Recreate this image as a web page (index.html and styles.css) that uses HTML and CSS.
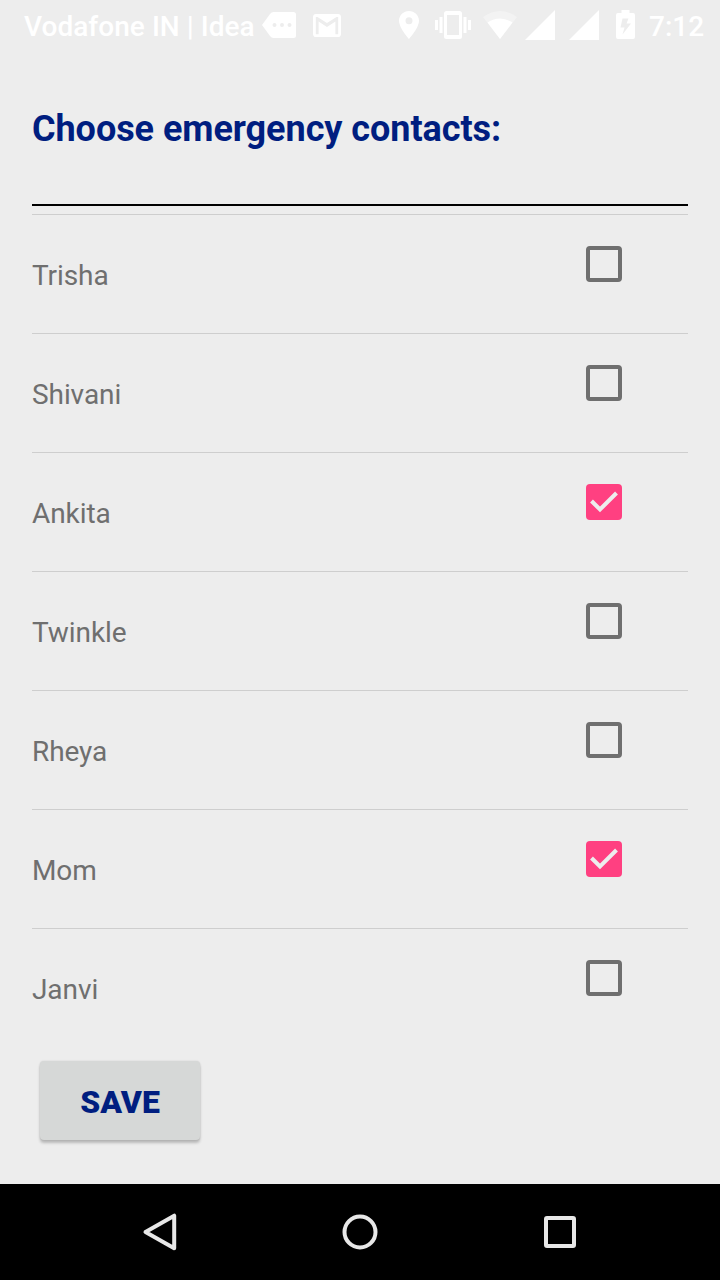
FILE: index.html
```
<!DOCTYPE html>
<html lang="en">
<head>
<meta charset="utf-8">
<title>Emergency contacts</title>
<link rel="stylesheet" href="styles.css">
</head>
<body>
<div class="screen">
  <header class="status">
    <span class="carrier">Vodafone IN | Idea</span>
    <svg class="ic-msg" width="34" height="26" viewBox="0 0 34 26"><path fill="#fff" fill-rule="evenodd" d="M8 2Q9.500 0 11.500 0H31.500Q34 0 34 2.500V23.500Q34 26 31.500 26H11.500Q9.500 26 8 24L0 13ZM12.500 11a2 2 0 1 0 0 4 2 2 0 0 0 0-4ZM20 11a2 2 0 1 0 0 4 2 2 0 0 0 0-4ZM27.500 11a2 2 0 1 0 0 4 2 2 0 0 0 0-4Z"/></svg>
    <svg class="ic-mail" width="28" height="23" viewBox="2 4 20 16" preserveAspectRatio="none"><path fill="#fff" d="M20 4H4c-1.100 0-2 .9-2 2v12c0 1.100.9 2 2 2h16c1.100 0 2-.9 2-2V6c0-1.100-.9-2-2-2zm0 14h-2V9.250L12 13 6 9.250V18H4V6h1.200l6.800 4.250L18.800 6H20v12z"/></svg>
    <svg class="ic-pin" width="20" height="28" viewBox="0 0 20 28"><path fill="#fff" fill-rule="evenodd" d="M10 0C4.500 0 0 4.400 0 9.800 0 17 10 28 10 28S20 17 20 9.800C20 4.400 15.500 0 10 0ZM10 6.300a3.500 3.500 0 1 1 0 7 3.500 3.500 0 0 1 0-7Z"/></svg>
    <svg class="ic-vibrate" width="36" height="28" viewBox="0 0 36 28"><path fill="#fff" fill-rule="evenodd" d="M0 9H3V19H0ZM4.500 6H7.500V22H4.500ZM28.500 6H31.500V22H28.500ZM33 9H36V19H33ZM11.500 0H24.500Q27 0 27 2.500V25.500Q27 28 24.500 28H11.500Q9 28 9 25.500V2.500Q9 0 11.500 0ZM12 4V24H24V4Z"/></svg>
    <svg class="ic-wifi" width="34" height="28" viewBox="0 0 34 28"><path fill="#fff" fill-opacity=".35" d="M0 6Q17-6 34 6L17 28Z"/><path fill="#fff" d="M4.500 11.500Q17 3.500 29.500 11.500L17 28Z"/></svg>
    <svg class="ic-signal" width="30" height="30" viewBox="0 0 30 30"><path fill="#fff" d="M30 0V30H0Z"/></svg>
    <svg class="ic-signal2" width="30" height="30" viewBox="0 0 30 30"><path fill="#fff" d="M30 0V30H0Z"/></svg>
    <svg class="ic-battery" width="19" height="29" viewBox="0 0 19 29"><path fill="#fff" fill-rule="evenodd" d="M5.500 0H13.500V3H17Q19 3 19 5V27Q19 29 17 29H2Q0 29 0 27V5Q0 3 2 3H5.500ZM6.500 8.500H12.500L10.500 13.500H15L6.500 24.500L8.500 17.500H4.500Z"/></svg>
    <span class="clock">7:12</span>
  </header>

  <main class="content">
    <h1 class="title">Choose emergency contacts:</h1>
    <ul class="contacts">
      <li class="contact"><span class="name">Trisha</span><span class="box"></span></li>
      <li class="contact"><span class="name">Shivani</span><span class="box"></span></li>
      <li class="contact"><span class="name">Ankita</span><span class="box checked"><svg width="36" height="36" viewBox="0 0 36 36"><path class="tick" d="M5.500 17L14 25.500L30.500 9"/></svg></span></li>
      <li class="contact"><span class="name">Twinkle</span><span class="box"></span></li>
      <li class="contact"><span class="name">Rheya</span><span class="box"></span></li>
      <li class="contact"><span class="name">Mom</span><span class="box checked"><svg width="36" height="36" viewBox="0 0 36 36"><path class="tick" d="M5.500 17L14 25.500L30.500 9"/></svg></span></li>
      <li class="contact"><span class="name">Janvi</span><span class="box"></span></li>
    </ul>
    <button class="save" type="button">SAVE</button>
  </main>

  <nav class="navbar">
    <svg width="40" height="40" viewBox="0 0 40 40"><path class="nav-icon" d="M34.200 3.700V36.300L5.500 20Z"/></svg>
    <svg width="40" height="40" viewBox="0 0 40 40"><circle class="nav-icon" cx="20" cy="20" r="15.500"/></svg>
    <svg width="40" height="40" viewBox="0 0 40 40"><rect class="nav-icon" x="6" y="6" width="28" height="28" rx="1"/></svg>
  </nav>
</div>
</body>
</html>
```
FILE: styles.css
```
* { box-sizing: border-box; }
body { margin: 0; background: #ededed; font-family: Roboto, sans-serif; }
svg { display: block; flex: none; }
.screen { width: 720px; height: 1280px; display: flex; flex-direction: column; background: #ededed; overflow: hidden; }

.status { height: 50px; flex: none; display: flex; align-items: flex-start; padding: 10px 0 0 24px; color: #fff; font-size: 28px; line-height: 33px; font-weight: 500; white-space: nowrap; }
.carrier { width: 238px; letter-spacing: .04px; }
.ic-msg { margin-top: 2px; }
.ic-mail { margin: 4px 0 0 17px; }
.ic-pin { margin: 1px 0 0 58px; }
.ic-vibrate { margin: 1px 0 0 16px; }
.ic-wifi { margin: 1px 0 0 12px; }
.ic-signal { margin-left: 8px; }
.ic-signal2 { margin-left: 14px; }
.ic-battery { margin-left: 17px; }
.clock { margin-left: 14px; }

.content { flex: 1; padding: 58px 32px 0; }
.title { margin: 0; height: 98px; border-bottom: 2px solid #000; color: #001e80; font-size: 36px; line-height: 42px; font-weight: 700; letter-spacing: -.05px; white-space: nowrap; }
.contacts { list-style: none; margin: 8px 0 0; padding: 0; }
.contact { height: 119px; border-top: 1px solid #cecece; display: flex; align-items: flex-start; justify-content: space-between; padding-right: 66px; }
.name { margin-top: 44px; color: #6f6f6f; font-size: 28px; line-height: 33px; letter-spacing: -.08px; }
.box { width: 36px; height: 36px; margin-top: 31px; border: 4px solid #6f6f6f; border-radius: 4px; }
.checked { border: 0; background: #ff4081; }
.tick { fill: none; stroke: #ededed; stroke-width: 4; }
.save { display: block; width: 160px; height: 79px; margin: 14px 0 0 8px; padding: 2px 0 0; border: 0; border-radius: 4px; background: #d6d8d7; box-shadow: 0 3px 3px rgba(0, 0, 0, .22), 0 0 2px rgba(0, 0, 0, .12); color: #001e80; font-family: inherit; font-size: 32px; line-height: 38px; font-weight: 900; }

.navbar { height: 96px; flex: none; display: flex; align-items: center; justify-content: center; gap: 160px; background: #000; }
.nav-icon { fill: none; stroke: #e8e8e8; stroke-width: 4; stroke-linejoin: round; }
```
